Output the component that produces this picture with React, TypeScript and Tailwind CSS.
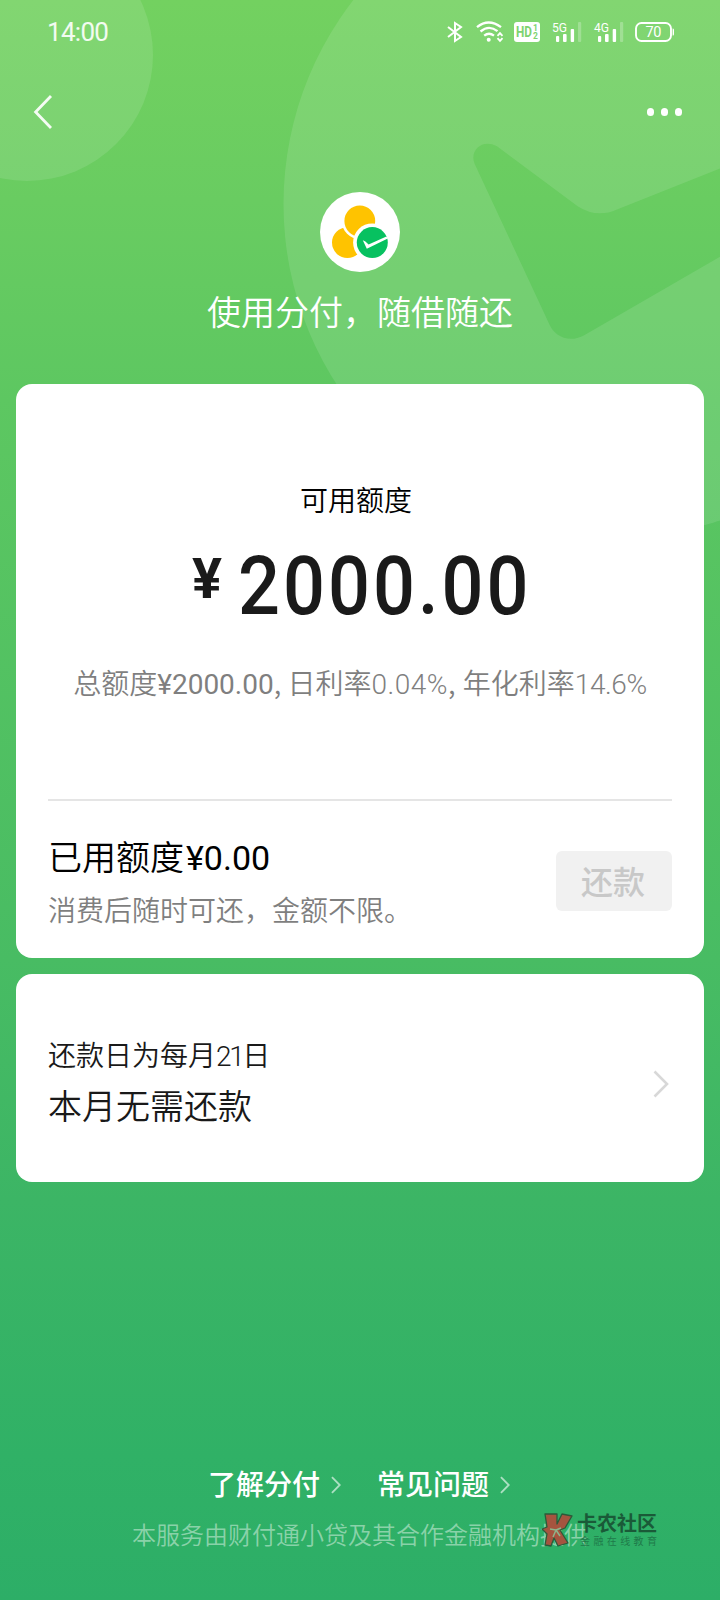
import React from 'react';

const DIGITS = "font-['Roboto','Noto_Sans_CJK_SC',sans-serif]";

const Backdrop: React.FC = () => (
  <svg className="absolute top-0 left-0 w-[720px] h-[540px]" viewBox="0 0 720 540" fill="white" aria-hidden="true">
    <circle cx="27" cy="55" r="126" fillOpacity="0.11" />
    <path
      fillOpacity="0.11"
      fillRule="evenodd"
      d="M283.5 204a333 333 0 0 1 666 0a333 333 0 0 1 -666 0Z
         M474.7 164 C469 151 482 138 497 146.3 L578 206.5 Q597 218.5 617 209.5 L960 73 V118 L583.3 335.7 C569 343 554 337 548.3 322 Z"
    />
  </svg>
);

const SignalBars: React.FC<{ label: string }> = ({ label }) => (
  <svg className="w-[30px] h-[22px] overflow-visible" viewBox="0 0 30 22" fill="white">
    <text x="0" y="11" fontSize="13" fontFamily="Roboto, sans-serif" fontWeight="400" textLength="15" lengthAdjust="spacingAndGlyphs">
      {label}
    </text>
    <rect x="4" y="15" width="3.2" height="6" rx="1" />
    <rect x="11" y="13" width="3.6" height="8" rx="1" />
    <rect x="18.7" y="8" width="3.4" height="13" rx="1" />
    <rect x="26" y="1" width="3.2" height="20" rx="1" fillOpacity="0.25" />
  </svg>
);

const StatusBar: React.FC = () => (
  <div className="flex h-16 items-center justify-between pl-[47px] pr-[45px]">
    <span className="font-['Roboto',sans-serif] text-[26px] leading-8 tracking-[-0.7px] text-white/90">14:00</span>
    <div className="flex items-center">
      <svg className="w-4 h-[22px]" viewBox="0 0 16 22" fill="none" stroke="white" strokeWidth="2">
        <path d="M1 6 L14 16 L8 20 V2 L14 6 L1 16" />
      </svg>
      <svg className="ml-[13px] w-7 h-[22px]" viewBox="0 0 28 22" fill="none" stroke="white" strokeWidth="2.3">
        <path d="M1 6.2 Q12.5 -3.2 25 6.2" />
        <path d="M4.5 10.5 Q13 3.5 21.5 10.2" />
        <path d="M8.2 14.6 Q13 10.8 18 14.6" />
        <circle cx="12.7" cy="18.8" r="2" fill="white" stroke="none" />
        <path d="M21.5 14.8 L24 12.2 L26.5 14.8 M21.5 17.2 L24 19.8 L26.5 17.2" strokeWidth="1.9" />
      </svg>
      <svg className="ml-[10px] w-[26px] h-5" viewBox="0 0 26 20" fill="#7dd370" fontFamily="Roboto, sans-serif" fontWeight="700">
        <rect width="26" height="20" rx="3" fill="white" />
        <text x="2" y="15.2" fontSize="15" textLength="16" lengthAdjust="spacingAndGlyphs">HD</text>
        <text x="19" y="9" fontSize="8.5">1</text>
        <text x="19" y="17.4" fontSize="8.5">2</text>
      </svg>
      <div className="ml-3 flex gap-3">
        <SignalBars label="5G" />
        <SignalBars label="4G" />
      </div>
      <svg className="ml-[11px] w-10 h-5" viewBox="0 0 40 20" fill="white">
        <rect x="1" y="1" width="35" height="18" rx="5.5" fill="none" stroke="white" strokeWidth="1.9" />
        <path d="M37.6 6.5 H38 Q39 6.5 39 8 V12 Q39 13.5 38 13.5 H37.6 Z" />
        <text x="10.5" y="15.2" fontSize="14.5" fontFamily="Roboto, sans-serif" textLength="16">70</text>
      </svg>
    </div>
  </div>
);

const NavBar: React.FC = () => (
  <div className="flex h-24 items-center justify-between pl-[33px] pr-[38px]">
    <svg className="w-5 h-9" viewBox="0 0 20 36" fill="none" stroke="white" strokeOpacity="0.92" strokeWidth="2.8">
      <path d="M18 2 L2.6 18 L18 34" />
    </svg>
    <div className="flex gap-[6.5px]">
      <i className="size-[7.5px] rounded-full bg-white" />
      <i className="size-[7.5px] rounded-full bg-white" />
      <i className="size-[7.5px] rounded-full bg-white" />
    </div>
  </div>
);

const Logo: React.FC = () => (
  <svg className="size-20" viewBox="0 0 80 80">
    <circle cx="40" cy="40" r="40" fill="white" />
    <circle cx="27.4" cy="50.6" r="15.4" fill="#ffc300" />
    <circle cx="39.8" cy="29" r="18" fill="white" />
    <circle cx="39.8" cy="29" r="15.4" fill="#ffc300" />
    <circle cx="52.3" cy="50.6" r="19.2" fill="white" />
    <circle cx="52.3" cy="50.6" r="15.5" fill="#07c160" />
    <path d="M42.8 48.3 L45.4 49.4 L48.6 52.4 L66.4 44.6 L67.8 46.6 L46.8 56.8 Z" fill="white" />
  </svg>
);

const Chevron: React.FC<{ className: string; strokeWidth: number }> = ({ className, strokeWidth }) => (
  <svg className={className} viewBox="0 0 16 28" fill="none" stroke="currentColor" strokeWidth={strokeWidth}>
    <path d="M1.5 1.5 L14 14 L1.5 26.5" />
  </svg>
);

const FooterLink: React.FC<{ children: React.ReactNode }> = ({ children }) => (
  <a className="flex items-center text-[28px] leading-8 font-medium text-white">
    {children}
    <Chevron className="mt-[3px] ml-[11px] w-[10px] h-[18px] text-white/60" strokeWidth={3} />
  </a>
);

const Watermark: React.FC = () => (
  <div className="absolute left-[541px] top-[1512px] flex">
    <svg className="w-8 h-9" viewBox="0 0 32 36" fill="#a5543f" stroke="#2c5a3a" strokeWidth="1.3" strokeLinejoin="round">
      <path d="M4 2 H16 V12 L21 2 L31 4 L24 16 L19 18 L27 31 L17 34 L13 26 L10 34 L4 33 L6 22 L1 17 L6 15 Z" />
      <path d="M9 17 L15 18 L20 16 M15 18 L12 25 M15 18 L19 24" stroke="#8db58c" strokeWidth="1.5" />
    </svg>
    <div className="ml-1 flex flex-col">
      <span className="text-[20px] leading-[22px] font-bold text-[#1a5a38]">卡农社区</span>
      <span className="ml-[3px] text-[10px] leading-[14px] tracking-[3.4px] text-[#1f7a4a]">金融在线教育</span>
    </div>
  </div>
);

const App: React.FC = () => {
  return (
    <div className="relative flex h-[1600px] w-[720px] flex-col overflow-hidden bg-[linear-gradient(180deg,#73d160_0%,#69cc61_12.5%,#5dc761_25%,#48bc63_60%,#3cb565_75%,#30b166_91%,#2dae67_100%)] font-['Noto_Sans_CJK_SC',sans-serif]">
      <Backdrop />
      <header className="relative flex h-[384px] flex-col">
        <StatusBar />
        <NavBar />
        <div className="mt-8 flex flex-col items-center">
          <Logo />
          <h1 className="mt-[19px] text-[34px] leading-[39px] font-[350] text-white">使用分付，随借随还</h1>
        </div>
      </header>

      <main className="relative flex flex-col gap-4 px-4">
        <section className="flex h-[574px] flex-col rounded-2xl bg-white px-8">
          <div className="flex h-[415px] flex-col items-center">
            <p className="mt-[95px] mr-2 text-[28px] leading-10 font-[350] text-black">可用额度</p>
            <div className={`${DIGITS} mt-[25px] ml-36 flex h-[80px] items-start self-start font-medium text-[#1a1a1a]`}>
              <span className="mt-[5px] w-[46px] text-[56px] leading-[60px] font-bold">¥</span>
              <span className="mt-[2px] origin-left scale-x-[0.9] text-[82px] leading-[80px] tracking-[3.4px]">2000.00</span>
            </div>
            <p className="mt-[38px] text-[28px] leading-10 font-[350] whitespace-nowrap text-[#7f7f7f]">
              总额度
              <span className={`${DIGITS} font-normal`}>¥2000.00</span>, 日利率
              <span className={`${DIGITS} font-light tracking-[0.5px]`}>0.04%</span>
              <span className="tracking-[0.5px]">, </span>年化利率
              <span className={`${DIGITS} font-light tracking-[-0.4px]`}>14.6%</span>
            </p>
          </div>
          <div className="flex flex-1 items-center justify-between border-t-2 border-[#e5e5e5] pt-[3px]">
            <div className="pt-[2px]">
              <p className="text-[34px] leading-[52px] font-[350] text-black">
                已用额度<span className={`${DIGITS} ml-[2px] font-normal`}>¥0.00</span>
              </p>
              <p className="text-[28px] leading-[51px] font-[350] text-[#7f7f7f]">消费后随时可还，金额不限。</p>
            </div>
            <button className="h-[60px] w-[116px] rounded-md bg-[#f1f1f1] pr-[2px] pb-[2px] text-[32px] leading-none font-medium text-[#c8c8c8]">还款</button>
          </div>
        </section>

        <section className="flex h-[208px] items-center justify-between rounded-2xl bg-white pr-[35px] pl-8 text-[#191919]">
          <div>
            <p className="pt-1 text-[28px] leading-[46px] font-[350]">
              还款日为每月<span className={`${DIGITS} font-light tracking-[-2.4px]`}>21</span>日
            </p>
            <p className="text-[34px] leading-[49px] font-[350]">本月无需还款</p>
          </div>
          <Chevron className="mt-3 w-4 h-7 text-[#d8d8d8]" strokeWidth={2.6} />
        </section>
      </main>

      <footer className="relative mt-[285px] flex flex-col items-center">
        <div className="mr-[2px] flex gap-9">
          <FooterLink>了解分付</FooterLink>
          <FooterLink>常见问题</FooterLink>
        </div>
        <p className="mt-[17px] text-[24px] leading-9 font-[350] text-white/45">本服务由财付通小贷及其合作金融机构提供</p>
      </footer>
      <Watermark />
    </div>
  );
};

export default App;
